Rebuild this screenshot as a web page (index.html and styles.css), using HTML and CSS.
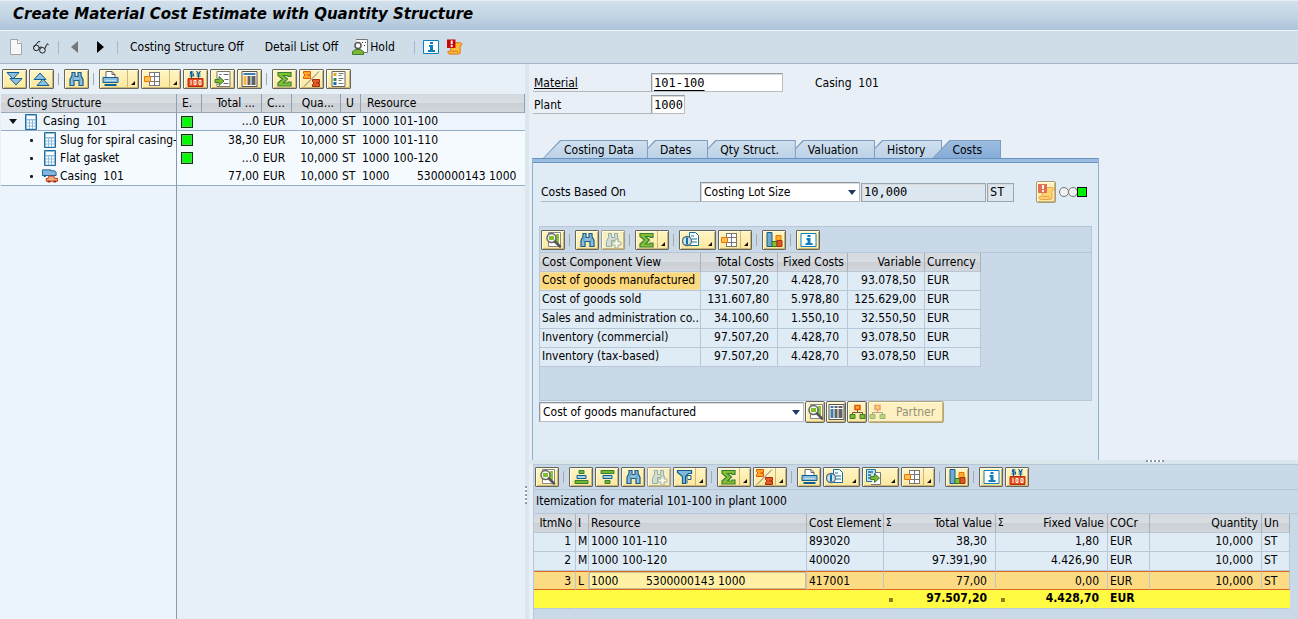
FILE: index.html
```
<!DOCTYPE html>
<html lang="en">
<head>
<meta charset="utf-8">
<title>Create Material Cost Estimate with Quantity Structure</title>
<link rel="stylesheet" href="styles.css">
</head>
<body>
<svg class="sprite" aria-hidden="true">
  <symbol id="doc" viewBox="0 0 16 16"><path d="M2.500 .5h7l4 4v11h-11z" fill="#f7f7f7" stroke="#a5a5a5"/><path d="M9.500 .5v4h4" fill="#fff" stroke="#a5a5a5"/></symbol>
  <symbol id="glasses" viewBox="0 0 17 16"><g fill="none" stroke="#111"><circle cx="3.500" cy="9" r="3"/><circle cx="10" cy="11.500" r="3"/><path d="M6.500 9c1-1.500 3-1 3-.5M1 8L5.500 2.500c1-1 2-.5 1.500 .5M12.500 10L14.500 5.500c.5-1.500 2-1 1.500 .5"/></g></symbol>
  <symbol id="prev" viewBox="0 0 16 16"><path d="M11 2v12L4 8z" fill="#777"/></symbol>
  <symbol id="next" viewBox="0 0 16 16"><path d="M5 2v12l7-6z" fill="#000"/></symbol>
  <symbol id="hold" viewBox="0 0 16 16"><path d="M4 .5h11.500v13H11" fill="#fff" stroke="#777"/><path d="M10 3h1v1h-1zM13 3h1v1h-1zM12 6h1v1h-1z" fill="#333"/><circle cx="6" cy="6.500" r="3" fill="#fff" stroke="#555" stroke-width="1.500"/><path d="M.5 15.500v-3l3-2h5l3 2v3z" fill="#7db52f" stroke="#3c7d35"/></symbol>
  <symbol id="info" viewBox="0 0 16 16"><path d="M.5 1.500h15v13H.5z" fill="#fff" stroke="#0b7fbf"/><path d="M7 3h3v2H7zM6 6h4v5h2v2H5v-2h2V8H6z" fill="#0b7fbf"/></symbol>
  <symbol id="scroll" viewBox="0 0 17 16"><path d="M4 3.500h9c3-1 4 3 1 3v6c1 3-2 3-3 3H3c-2 0-3-3-1-3h2z" fill="#ffbf35" stroke="#dc6a12"/><path d="M5 12.500h6c0 2 1 3 2 2" fill="#ffe08a" stroke="#dc6a12"/><path d="M0 0h9v9H0z" fill="#cb0606"/><path d="M4 1h2v4H4zM4 6h2v2H4z" fill="#fff"/></symbol>
  <symbol id="down" viewBox="0 0 16 16"><path d="M3.500 7.500h12L9.500 14z" fill="#8fbedd" stroke="#0c5f94"/><path d="M.5 1.500h12l-6 6.500z" fill="#8fbedd" stroke="#0c5f94"/></symbol>
  <symbol id="up" viewBox="0 0 16 16"><path d="M.5 8.500h12L6.500 2z" fill="#8fbedd" stroke="#0c5f94"/><path d="M3.500 14.500h12L9.500 8z" fill="#8fbedd" stroke="#0c5f94"/></symbol>
  <symbol id="find" viewBox="0 0 16 16"><path d="M3.500 1.500h3v4h3v-4h3v3l2 4v6h-4v-5h-5v5h-4v-6l2-4z" fill="#8fbedd" stroke="#145d8c" stroke-width="1.200"/><path d="M4.500 4v6M11.500 4v6" stroke="#5d9bc3"/></symbol>
  <symbol id="findnext" viewBox="0 0 17 16"><g opacity=".5"><path d="M3.500 1.500h3v4h3v-4h3v4l1 3h-7v6h-5v-5l2-4z" fill="#b4ced9" stroke="#31708e"/><path d="M10 7h3v3h3v3h-3v3h-3v-3H7v-3h3z" fill="#fff" stroke="#477985"/></g></symbol>
  <symbol id="print" viewBox="0 0 16 16"><path d="M3.500 6.500V.5h6l3 3v3" fill="#fff" stroke="#666"/><path d="M9.500 .5v3h3" fill="none" stroke="#666"/><path d="M.5 6.500h15v5H.5z" fill="#8fbedd" stroke="#0c5f94"/><path d="M3 9.500h10" stroke="#c2dced"/><path d="M2 14h12" stroke="#0c5f94" stroke-width="2"/></symbol>
  <symbol id="layout" viewBox="0 0 17 16"><path d="M5 1h11v14H5z" fill="#fff"/><path d="M5.500 1v14M10.500 1v14M15.500 1v14M5 1.500h11M5 5.500h11M5 10.500h11M5 14.500h11" fill="none" stroke="#777"/><path d="M.5 5.500h6v5h-6z" fill="#ffc04d" stroke="#e5780c"/></symbol>
  <symbol id="currency" viewBox="0 0 16 16"><path d="M6 1H3v2h3v2H2M4 0v7M9 0l2 3 2-3M9 3h4M9 5h4M11 3v4" fill="none" stroke="#0c5f94" stroke-width="1.200"/><path d="M.5 7.500h15v8H.5z" fill="#e0501e" stroke="#bd2b0a"/><path d="M3.500 9v5M6.500 9.500h2v4h-2zM11.500 9.500h2v4h-2z" fill="none" stroke="#fff"/></symbol>
  <symbol id="branch" viewBox="0 0 16 16"><path d="M2.500 .5h13v15h-13z" fill="#fff" stroke="#777"/><path d="M5 3.500h2M9 3.500h5M10 8.500h4M9 12.500h5" stroke="#666"/><path d="M.5 8.500h4v-3l5 4.500-5 4.500v-3h-4z" fill="#80b831" stroke="#3a7d34"/></symbol>
  <symbol id="columns" viewBox="0 0 16 16"><path d="M.5 .5h15v15H.5z" fill="#fff" stroke="#555"/><path d="M2 2h12v2H2z" fill="#3b7fb0"/><path d="M2 5h3v9H2z" fill="#ffb52d"/><path d="M6 5h3v9H6zM10 5h4v9h-4z" fill="#626262"/></symbol>
  <symbol id="grid" viewBox="0 0 16 16"><path d="M.5 .5h15v15H.5z" fill="#fff" stroke="#555"/><path d="M2 2h3v2H2zM2 5h3v9H2z" fill="#3b7fb0"/><path d="M6 2h3v2H6zM10 2h4v2h-4zM6 5h3v9H6zM10 5h4v9h-4z" fill="#626262"/></symbol>
  <symbol id="sum" viewBox="0 0 16 16"><path d="M1.500 1.500h13v4h-3v-1H7l4 3.500-4 4h4.500v-1h3v4h-13v-3L6 8 1.500 4.500z" fill="#89bf2d" stroke="#34813c" stroke-width="1.200"/></symbol>
  <symbol id="subsum" viewBox="0 0 17 16"><path d="M1 15.500L16 .5" stroke="#777"/><path d="M.5 .5h7v3H5.500L4.500 4l1 .5h2v3h-7v-2L2 4 .5 2.500z" fill="#ffa424" stroke="#df5b0b"/><path d="M9.500 8.500h7v3h-2l-1 .5 1 .5h2v3h-7v-2l1.500-1.500-1.500-1.500z" fill="#e35a22" stroke="#a82a10"/></symbol>
  <symbol id="legend" viewBox="0 0 16 16"><path d="M1.500 .5h13v15h-13z" fill="#fff" stroke="#666"/><path d="M3 2h3v3H3z" fill="#e5a718"/><path d="M3 7h3v3H3z" fill="#378748"/><path d="M3 11h3v3H3z" fill="#17719f"/><path d="M8 2.500h5M8 4.500h3M8 7.500h5M8 9.500h3M8 12.500h5" stroke="#777"/></symbol>
  <symbol id="detail" viewBox="0 0 17 16"><path d="M3.500 .5h12v14h-12z" fill="#fff" stroke="#888"/><path d="M11 2h3v9h-3z" fill="#8bc52f"/><circle cx="6.500" cy="6" r="4.500" fill="#f6f8f2" stroke="#666" stroke-width="1.500"/><path d="M4 4h5v4H4z" fill="#7fbf2a"/><path d="M10 9.500l5 5" stroke="#555" stroke-width="2.500" stroke-linecap="round"/></symbol>
  <symbol id="view" viewBox="0 0 17 16"><path d="M7.500 .5h6l3 3v10h-9z" fill="#fff" stroke="#0c6f9e"/><path d="M9 4h3M10 7h5M10 10h5" stroke="#17719f"/><circle cx="5" cy="9" r="4.500" fill="#d0e3ec" stroke="#4d6f80" stroke-width="1.300"/><path d="M5 5.500v7" stroke="#17719f" stroke-width="2"/></symbol>
  <symbol id="chart" viewBox="0 0 16 16"><path d="M.5 .5h5v14h-5z" fill="#72aacf" stroke="#0c5f94"/><path d="M9.500 3.500h5v6h-5z" fill="#ffae26" stroke="#e3770e"/><path d="M5.500 9.500h5v5h-5z" fill="#85bd2c" stroke="#367a32"/><path d="M10.500 8.500h5v6h-5z" fill="#dc5522" stroke="#a83413"/></symbol>
  <symbol id="asc" viewBox="0 0 16 16"><path d="M5.500 1.500h5v3h-5zM1.500 11.500h13v3h-13z" fill="#79b62b" stroke="#34803a"/><path d="M3.500 6.500h9v3h-9z" fill="#a9d0e8" stroke="#0c5f94"/></symbol>
  <symbol id="desc" viewBox="0 0 16 16"><path d="M1.500 1.500h13v3h-13zM5.500 11.500h5v3h-5z" fill="#79b62b" stroke="#34803a"/><path d="M3.500 6.500h9v3h-9z" fill="#a9d0e8" stroke="#0c5f94"/></symbol>
  <symbol id="filter" viewBox="0 0 16 16"><path d="M1 1.500h14v3h-3l-3 3v7H6v-7l-5-4z" fill="#84b6d8" stroke="#0c5f94" stroke-width="1.200"/><path d="M10.500 14.500v-8h4v4h-3" fill="none" stroke="#0c5f94"/></symbol>
  <symbol id="export" viewBox="0 0 17 16"><path d="M1.500 .5h9v12h-9z" fill="#cae0ed" stroke="#1678a5"/><path d="M3 3h5M3 6h3M3 9h2" stroke="#17719f" stroke-width="1.500"/><path d="M11 3.500h4.500v12H6" fill="#fff" stroke="#777"/><path d="M5.500 7.500h4v-3l5 4.500-5 4.500v-3h-4z" fill="#80b831" stroke="#3a7d34"/></symbol>
  <symbol id="tree" viewBox="0 0 16 16"><path d="M8 5v4M3 12V8.500h10V12" fill="none" stroke="#6d5732"/><path d="M5.500 1.500h5v4h-5z" fill="#ffb129" stroke="#e15214" stroke-width="1.500"/><path d="M.5 10.500h5v4h-5zM10.500 10.500h5v4h-5z" fill="#82ba2f" stroke="#3e7b32"/></symbol>
  <symbol id="calc" viewBox="0 0 14 16"><path d="M1.500 .5h11v15h-11z" fill="#8ebcdc" stroke="#246c9e"/><path d="M3 2h8v3H3z" fill="#fff"/><path d="M3 7.500h8M3 10.500h8M3 13.500h8" stroke="#fff" stroke-width="2" stroke-dasharray="2 1"/></symbol>
  <symbol id="cars" viewBox="0 0 17 16"><path d="M.5 1.500h9v1h4l1.500 2v3H.5z" fill="#83b8dc" stroke="#0c5f94"/><path d="M2 7h2v2H2zM10 7h2v2h-2z" fill="#0c5f94"/><path d="M4.500 13.500h12v-3h-3l-1-2.500H7.500l-1 2.500h-2z" fill="#efab7d" stroke="#bd320e"/><path d="M6 13h3v2H6zM12 13h3v2h-3z" fill="#a52308"/></symbol>
</svg>

<header class="titlebar"><h1>Create Material Cost Estimate with Quantity Structure</h1></header>
<nav class="appbar" aria-label="Application toolbar">
  <button class="flat" aria-label="New"><svg class="ic"><use href="#doc"/></svg></button>
  <button class="flat glasses" aria-label="Display"><svg class="ic"><use href="#glasses"/></svg></button>
  <i class="rule"></i>
  <button class="flat" aria-label="Previous"><svg class="ic"><use href="#prev"/></svg></button>
  <button class="flat next" aria-label="Next"><svg class="ic"><use href="#next"/></svg></button>
  <i class="rule"></i>
  <button class="flat text">Costing Structure Off</button>
  <button class="flat text detail-off">Detail List Off</button>
  <button class="flat text"><svg class="ic"><use href="#hold"/></svg>Hold</button>
  <i class="rule last"></i>
  <button class="flat" aria-label="Information"><svg class="ic"><use href="#info"/></svg></button>
  <button class="flat log" aria-label="Log"><svg class="ic"><use href="#scroll"/></svg></button>
</nav>

<main class="work">
  <section class="structure" aria-label="Costing structure">
    <div class="tools wide">
      <button class="btn" aria-label="Expand"><svg class="ic"><use href="#down"/></svg></button>
      <button class="btn" aria-label="Collapse"><svg class="ic"><use href="#up"/></svg></button>
      <i class="sep"></i>
      <button class="btn" aria-label="Find"><svg class="ic"><use href="#find"/></svg></button>
      <i class="sep"></i>
      <button class="btn split" aria-label="Print"><svg class="ic"><use href="#print"/></svg><span class="more"></span></button>
      <button class="btn split" aria-label="Layout"><svg class="ic"><use href="#layout"/></svg><span class="more"></span></button>
      <button class="btn" aria-label="Currency"><svg class="ic"><use href="#currency"/></svg></button>
      <button class="btn" aria-label="Partial structure"><svg class="ic"><use href="#branch"/></svg></button>
      <button class="btn" aria-label="Columns"><svg class="ic"><use href="#columns"/></svg></button>
      <i class="sep"></i>
      <button class="btn" aria-label="Sum"><svg class="ic"><use href="#sum"/></svg></button>
      <button class="btn" aria-label="Subtotal"><svg class="ic"><use href="#subsum"/></svg></button>
      <button class="btn" aria-label="Legend"><svg class="ic"><use href="#legend"/></svg></button>
    </div>
    <table class="tree">
      <colgroup><col class="w-name"><col class="w-e"><col class="w-total"><col class="w-c"><col class="w-qty"><col class="w-u"><col></colgroup>
      <thead><tr><th>Costing Structure</th><th>E.</th><th class="num">Total ...</th><th>C...</th><th class="num">Qua...</th><th>U</th><th>Resource</th></tr></thead>
      <tbody>
        <tr class="root"><td><div class="node"><span class="open"></span><svg class="ic"><use href="#calc"/></svg>Casing  101</div></td><td><span class="ok"></span></td><td class="num">...0</td><td>EUR</td><td class="num">10,000</td><td>ST</td><td>1000 101-100</td></tr>
        <tr><td><div class="node child"><span class="dot"></span><svg class="ic"><use href="#calc"/></svg>Slug for spiral casing-</div></td><td><span class="ok"></span></td><td class="num">38,30</td><td>EUR</td><td class="num">10,000</td><td>ST</td><td>1000 101-110</td></tr>
        <tr><td><div class="node child"><span class="dot"></span><svg class="ic"><use href="#calc"/></svg>Flat gasket</div></td><td><span class="ok"></span></td><td class="num">...0</td><td>EUR</td><td class="num">10,000</td><td>ST</td><td>1000 100-120</td></tr>
        <tr class="end"><td><div class="node child"><span class="dot"></span><svg class="ic"><use href="#cars"/></svg>Casing  101</div></td><td></td><td class="num">77,00</td><td>EUR</td><td class="num">10,000</td><td>ST</td><td>1000        5300000143 1000</td></tr>
      </tbody>
    </table>
    <div class="treefill"></div>
  </section>
  <div class="vsplit"><span class="grip"></span></div>
  <div class="right">
    <section class="details" aria-label="Material details">
      <div class="keys">
        <div class="field"><label for="mat"><u>Material</u></label><input id="mat" class="link" value="101-100"><span class="desc">Casing  101</span></div>
        <div class="field"><label for="plant">Plant</label><input id="plant" class="short" value="1000"></div>
      </div>
      <div class="tabs" role="tablist">
        <button class="tab" role="tab">Costing Data</button><button class="tab" role="tab">Dates</button><button class="tab" role="tab">Qty Struct.</button><button class="tab" role="tab">Valuation</button><button class="tab" role="tab">History</button><button class="tab active" role="tab" aria-selected="true">Costs</button>
      </div>
      <div class="panel" role="tabpanel">
        <div class="basis">
          <label for="basis">Costs Based On</label>
          <span class="drop lot"><select id="basis"><option>Costing Lot Size</option></select></span>
          <input class="ro amount" value="10,000" readonly aria-label="Lot size"><input class="ro unit" value="ST" readonly aria-label="Unit">
          <button class="btn small faded" aria-label="Log"><svg class="ic"><use href="#scroll"/></svg></button>
          <span class="lights"><i></i><i></i><b></b></span>
        </div>
        <div class="gridbox">
          <div class="tools">
            <button class="btn" aria-label="Details"><svg class="ic"><use href="#detail"/></svg></button>
            <i class="sep"></i>
            <button class="btn" aria-label="Find"><svg class="ic"><use href="#find"/></svg></button>
            <button class="btn off" aria-label="Find next"><svg class="ic"><use href="#findnext"/></svg></button>
            <i class="sep"></i>
            <button class="btn split" aria-label="Sum"><svg class="ic"><use href="#sum"/></svg><span class="more"></span></button>
            <i class="sep"></i>
            <button class="btn menu" aria-label="Views"><svg class="ic"><use href="#view"/></svg><span class="more"></span></button>
            <button class="btn split" aria-label="Layout"><svg class="ic"><use href="#layout"/></svg><span class="more"></span></button>
            <i class="sep"></i>
            <button class="btn" aria-label="Graphic"><svg class="ic"><use href="#chart"/></svg></button>
            <i class="sep"></i>
            <button class="btn" aria-label="Information"><svg class="ic"><use href="#info"/></svg></button>
          </div>
          <table class="grid views">
            <colgroup><col class="w-view"><col class="w-tc"><col class="w-fc"><col class="w-var"><col class="w-cur"></colgroup>
            <thead><tr><th>Cost Component View</th><th class="num">Total Costs</th><th class="num">Fixed Costs</th><th class="num">Variable</th><th>Currency</th></tr></thead>
            <tbody>
              <tr><td class="picked">Cost of goods manufactured</td><td class="num">97.507,20</td><td class="num">4.428,70</td><td class="num">93.078,50</td><td>EUR</td></tr>
              <tr><td>Cost of goods sold</td><td class="num">131.607,80</td><td class="num">5.978,80</td><td class="num">125.629,00</td><td>EUR</td></tr>
              <tr><td>Sales and administration co...</td><td class="num">34.100,60</td><td class="num">1.550,10</td><td class="num">32.550,50</td><td>EUR</td></tr>
              <tr><td>Inventory (commercial)</td><td class="num">97.507,20</td><td class="num">4.428,70</td><td class="num">93.078,50</td><td>EUR</td></tr>
              <tr><td>Inventory (tax-based)</td><td class="num">97.507,20</td><td class="num">4.428,70</td><td class="num">93.078,50</td><td>EUR</td></tr>
            </tbody>
          </table>
        </div>
        <div class="pick">
          <span class="drop cogm"><select aria-label="Cost component view"><option>Cost of goods manufactured</option></select></span>
          <button class="btn small" aria-label="Details"><svg class="ic"><use href="#detail"/></svg></button>
          <button class="btn small" aria-label="Table"><svg class="ic"><use href="#grid"/></svg></button>
          <button class="btn small" aria-label="Hierarchy"><svg class="ic"><use href="#tree"/></svg></button>
          <button class="btn small partner" disabled><svg class="ic"><use href="#tree"/></svg>Partner</button>
        </div>
      </div>
    </section>
    <div class="hsplit"><span class="grip"></span></div>
    <section class="items" aria-label="Itemization">
      <div class="tools">
        <button class="btn" aria-label="Details"><svg class="ic"><use href="#detail"/></svg></button>
        <i class="sep"></i>
        <button class="btn" aria-label="Sort ascending"><svg class="ic"><use href="#asc"/></svg></button>
        <button class="btn" aria-label="Sort descending"><svg class="ic"><use href="#desc"/></svg></button>
        <button class="btn" aria-label="Find"><svg class="ic"><use href="#find"/></svg></button>
        <button class="btn off" aria-label="Find next"><svg class="ic"><use href="#findnext"/></svg></button>
        <button class="btn split" aria-label="Filter"><svg class="ic"><use href="#filter"/></svg><span class="more"></span></button>
        <i class="sep"></i>
        <button class="btn split" aria-label="Sum"><svg class="ic"><use href="#sum"/></svg><span class="more"></span></button>
        <button class="btn split" aria-label="Subtotal"><svg class="ic"><use href="#subsum"/></svg><span class="more"></span></button>
        <i class="sep"></i>
        <button class="btn" aria-label="Print"><svg class="ic"><use href="#print"/></svg></button>
        <button class="btn menu" aria-label="Views"><svg class="ic"><use href="#view"/></svg><span class="more"></span></button>
        <button class="btn menu" aria-label="Export"><svg class="ic"><use href="#export"/></svg><span class="more"></span></button>
        <button class="btn split" aria-label="Layout"><svg class="ic"><use href="#layout"/></svg><span class="more"></span></button>
        <i class="sep"></i>
        <button class="btn" aria-label="Graphic"><svg class="ic"><use href="#chart"/></svg></button>
        <i class="sep"></i>
        <button class="btn" aria-label="Information"><svg class="ic"><use href="#info"/></svg></button>
        <button class="btn" aria-label="Currency"><svg class="ic"><use href="#currency"/></svg></button>
      </div>
      <h2>Itemization for material 101-100 in plant 1000</h2>
      <table class="grid itemization">
        <colgroup><col class="w-no"><col class="w-i"><col><col class="w-ce"><col class="w-val"><col class="w-val"><col class="w-co"><col class="w-val"><col class="w-un"></colgroup>
        <thead><tr><th class="num">ItmNo</th><th>I</th><th>Resource</th><th>Cost Element</th><th class="num"><span class="sigma">Σ</span>Total Value</th><th class="num"><span class="sigma">Σ</span>Fixed Value</th><th>COCr</th><th class="num">Quantity</th><th>Un</th></tr></thead>
        <tbody>
          <tr><td class="num no">1</td><td>M</td><td>1000 101-110</td><td>893020</td><td class="num">38,30</td><td class="num">1,80</td><td>EUR</td><td class="num">10,000</td><td>ST</td></tr>
          <tr><td class="num no">2</td><td>M</td><td>1000 100-120</td><td>400020</td><td class="num">97.391,90</td><td class="num">4.426,90</td><td>EUR</td><td class="num">10,000</td><td>ST</td></tr>
          <tr class="sel"><td class="num no">3</td><td>L</td><td class="focus">1000        5300000143 1000</td><td>417001</td><td class="num">77,00</td><td class="num">0,00</td><td>EUR</td><td class="num">10,000</td><td>ST</td></tr>
          <tr class="total"><td></td><td></td><td></td><td></td><td class="num"><span class="mark"></span>97.507,20</td><td class="num"><span class="mark"></span>4.428,70</td><td>EUR</td><td></td><td></td></tr>
        </tbody>
      </table>
    </section>
  </div>
</main>
</body>
</html>
```
FILE: styles.css
```
* { box-sizing: border-box; }
body {
  margin: 0; min-height: 100vh; display: flex; flex-direction: column;
  font: 12px/18px "DejaVu Sans Condensed", "DejaVu Sans", Tahoma, sans-serif;
  color: #000; background: #e8eff7;
}
button, input, select { font: inherit; color: inherit; margin: 0; }
.sprite { display: none; }
.ic { width: 16px; height: 16px; flex: none; display: block; }

.titlebar {
  height: 30px; padding: 0 13px; display: flex; align-items: center;
  background: linear-gradient(#d2e0eb, #bfd2e2 60%, #adc4da);
  border-top: 1px solid #e7eef5;
}
.titlebar h1 { margin: 0 0 4px; font-family: "DejaVu Sans", Tahoma, sans-serif; font-size: 15px; line-height: 20px; font-weight: bold; font-style: italic; white-space: nowrap; }
.appbar {
  height: 34px; display: flex; align-items: center; padding: 0 8px;
  background: #cfdde8; border-top: 1px solid #edf3f8; border-bottom: 1px solid #a3b7cb;
}
.flat { border: 0; padding: 0; background: none; display: flex; align-items: center; gap: 2px; white-space: nowrap; }
.flat.glasses { margin: 0 9px; }
.rule { width: 1px; height: 13px; background: #9dbbd8; margin-right: 8px; }
.flat.next { margin: 0 9px; }
.appbar .rule:nth-of-type(2) { margin-right: 12px; }
.detail-off { margin: 0 14px 0 21px; }
.rule.last { margin: 0 8px 0 19px; }
.log { margin-left: 8px; }

.work { flex: 1; display: grid; grid-template-columns: minmax(0, 525fr) 4px minmax(0, 769fr); }
.structure { display: flex; flex-direction: column; background: #e8f0f7; }
.tools { display: flex; align-items: center; gap: 2px; height: 24px; padding: 0 1px; }
.tools.wide { height: 30px; padding: 0 2px; }
.sep { width: 4px; height: 12px; border-left: 1px solid #a5a9ab; margin-left: 2px; }
.btn {
  width: 24px; height: 20px; padding: 0; border: 1px solid #68645a; border-radius: 1px;
  box-shadow: inset 1px 1px #fffbe0, inset -1px -1px #c9b67a;
  background: linear-gradient(#fff5c6, #fce79c); display: flex; align-items: center; justify-content: center;
}
.btn .ic { width: 17px; }
.wide .btn { width: 25px; }
.btn.split { width: 34px; justify-content: space-between; padding-left: 2px; }
.btn.menu { width: 37px; justify-content: space-between; padding-left: 2px; }
.wide .btn.split { width: 40px; }
.more { align-self: stretch; width: 11px; display: flex; align-items: flex-end; justify-content: center; padding-bottom: 3px; }
.split .more { border-left: 1px solid #cdb973; }
.more::after { content: ""; border-left: 4px solid transparent; border-bottom: 4px solid #111; }
.btn.off { border-color: #a49d86; background: #f6eec5; }

table { border-collapse: separate; border-spacing: 0; table-layout: fixed; }
th, td { padding: 0; white-space: pre; overflow: hidden; font-weight: normal; text-align: left; }
.num { text-align: right; }
th { background: linear-gradient(#d3dae0, #d9dde1 50%, #cbd0d6 50%, #d3d7dc); }

.tree { width: 100%; padding-left: 1px; }
.w-name { width: 176px; } .w-e { width: 25px; } .w-total { width: 60px; } .w-c { width: 30px; }
.w-qty { width: 49px; } .w-u { width: 20px; }
.tree th { height: 19px; line-height: 18px; padding: 0 6px; border-right: 1px solid #8fa0b0; border-bottom: 1px solid #9aa8b5; }
.tree th:nth-child(2), .tree th:nth-child(4), .tree th:nth-child(6) { padding: 0 5px; }
.tree td { height: 18px; background: #f5faff; padding: 0 1px; }
.tree td:first-child { border-right: 1px solid #879bb0; padding: 0; }
.tree td.num { padding-right: 3px; }
.tree .root td { background: #edf4fc; border-bottom: 1px solid #94adc6; line-height: 17px; }
.tree .end td { border-bottom: 1px solid #94adc6; height: 19px; }
.node { display: flex; align-items: center; height: 17px; padding-left: 8px; }
.node .ic { width: 14px; margin: 0 5px 0 7px; }
.node.child { padding-left: 29px; }
.node.child .ic { width: 16px; margin: 0 2px 0 9px; }
.open { flex: none; border: 4px solid transparent; border-top: 5px solid #111; border-bottom: 0; }
.dot { flex: none; width: 3px; height: 3px; border-radius: 1px; background: #222; }
.ok { display: block; width: 12px; height: 12px; margin-left: 3px; border: 1px solid #063b06; background: #00fb00; box-shadow: inset 0 0 0 1px #58cf58; }
.treefill { flex: 1; width: 177px; border-right: 1px solid #879bb0; background: #ebf3fb; }

.vsplit { background: #dbe6ed; display: flex; align-items: flex-start; padding-top: 422px; }
.vsplit .grip { width: 2px; height: 18px; background: repeating-linear-gradient(#8a99a8 0 2px, #fff 2px 4px); }
.right { display: flex; flex-direction: column; min-width: 0; }
.details { flex: 1; display: flex; flex-direction: column; padding-left: 3px; }
.keys { padding: 9px 0 0 1px; display: grid; gap: 3px; }
.field { display: flex; align-items: stretch; height: 19px; }
.field label { width: 118px; border-bottom: 1px solid #b4b8bb; padding-left: 1px; }
.field label, .desc { line-height: 20px; white-space: pre; }
input {
  font: 12px/16px "DejaVu Sans Mono", "Liberation Mono", monospace; padding: 0 2px; border-radius: 0;
  border: 1px solid #989da1; border-right-color: #b8bcc0; border-bottom-color: #b8bcc0; background: #fff; min-width: 0;
  box-shadow: inset 1px 1px #d8dadc;
}
#mat { width: 132px; text-decoration: underline; text-underline-offset: 3px; }
#plant { width: 34px; padding-right: 0; }
.desc { margin-left: 32px; }
.tabs { display: flex; padding-left: 11px; margin-top: 26px; height: 18px; }
.tab { position: relative; isolation: isolate; border: 0; background: none; padding: 1px 17px 0 22px; margin-left: -10px; white-space: nowrap; line-height: 18px; }
.tab:first-child { margin-left: 0; padding: 1px 14px 0 21px; }
.tab:nth-child(1) { z-index: 5; } .tab:nth-child(2) { z-index: 4; } .tab:nth-child(3) { z-index: 3; } .tab:nth-child(4) { z-index: 2; } .tab:nth-child(5) { z-index: 1; }
.tab.active { z-index: 6; padding-right: 19px; padding-left: 20px; }
.tab::before, .tab::after { content: ""; position: absolute; inset: 0; z-index: -1; clip-path: polygon(17px 0, 100% 0, 100% 100%, 0 100%); background: #7f9dbf; }
.tab::after { inset: 1px 1px 0 1px; background: linear-gradient(#cfdfee, #bcd2e7); }
.tab.active::after { background: linear-gradient(#9dbddf, #84abd6); }
.panel { flex: 1; margin-right: 26%; background: #dfebf5; border: 1px solid #8eb0d0; border-top-color: #6793c3; border-bottom: 0; padding: 0 6px 24px; }
.panel::before { content: ""; display: block; height: 3px; margin: 0 -6px 19px; background: #9cbce0; border-bottom: 1px solid #6793c3; }
.basis { display: flex; align-items: center; height: 20px; padding-left: 2px; }
.basis label { flex: 0 1 159px; height: 20px; line-height: 21px; border-bottom: 1px solid #b4b8bb; white-space: nowrap; }
.basis .btn { margin: 0 3px 0 22px; }
.drop { position: relative; display: flex; }
.drop select { appearance: none; width: 100%; height: 20px; line-height: 16px; border: 1px solid #8f979e; border-right-color: #b8bcc0; border-bottom-color: #b8bcc0; border-radius: 0; background: #fff; padding: 0 3px; box-shadow: inset 1px 1px #d8dadc; }
.drop::after { content: ""; position: absolute; right: 4px; top: 8px; border: 4px solid transparent; border-top: 5px solid #203a68; border-bottom: 0; pointer-events: none; }
.lot { flex: 0 1 160px; }
.ro { background: #dce7f0; height: 19px; border-color: #9ba6b0; }
.amount { margin: 0 1px; flex: 0 1 125px; width: 0; }
.unit { flex: 0 1 27px; width: 0; }
.btn.small { width: 20px; height: 22px; border-radius: 2px; }
.btn.faded .ic { opacity: .55; }
.btn.faded { border-color: #a99b79; }
.lights { display: flex; align-items: center; }
.lights i { width: 10px; height: 10px; border: 1px solid #777; border-radius: 50%; background: #f1f1f1; margin-right: -1px; }
.lights b { width: 10px; height: 10px; border: 1px solid #111; background: #00f000; }
.gridbox { margin-top: 24px; min-height: 175px; background: #cad9e8; border: 1px solid #b7c7d8; }
.gridbox .tools { border-bottom: 1px solid #b7c7d8; height: 26px; }
.grid th { height: 19px; line-height: 18px; padding: 0 2px; border-right: 1px solid #a8b2bd; border-bottom: 1px solid #b9c6d3; }
.grid th.num { padding-right: 3px; }
.grid td { height: 19px; line-height: 16px; padding: 0 2px 2px; background: #dfebf5; border-right: 1px solid #b9c8d6; border-bottom: 1px solid #b9c8d6; }
.grid td.num { padding-right: 8px; }
.views { width: 441px; max-width: 100%; }
.w-view { width: 161px; } .w-tc { width: 77px; } .w-fc { width: 70px; } .w-var { width: 77px; } .w-cur { width: 56px; }
.grid td.picked { background: #fdd97c; box-shadow: inset 0 0 0 1px #eee0b3; }
.pick { display: flex; gap: 1px; align-items: center; }
.cogm { flex: 0 1 265px; }
.btn.partner { width: 76px; justify-content: flex-start; gap: 10px; border-color: #b5a477; color: #979078; background: #fdf1c2; }
.partner .ic { opacity: .5; }

.hsplit { height: 4px; background: #dbe6ed; display: flex; justify-content: flex-end; padding-right: 134px; }
.hsplit .grip { width: 18px; height: 2px; background: repeating-linear-gradient(90deg, #8a99a8 0 2px, #fff 2px 4px); }
.items { margin-left: 4px; background: #cad9e8; border: 1px solid #b7c7d8; border-right: 0; border-bottom: 0; padding-bottom: 10px; }
.items .tools { height: 25px; border-bottom: 1px solid #b7c7d8; }
.items h2 { margin: 0; font-size: 12px; font-weight: normal; line-height: 23px; padding-left: 2px; border-bottom: 1px solid #b7c7d8; white-space: nowrap; }
.itemization { width: calc(100% - 8px); }
.w-no { width: 42px; } .w-i { width: 13px; } .w-ce { width: 77px; } .w-val { width: 112px; } .w-co { width: 42px; } .w-un { width: 28px; }
.grid td.no { padding-right: 4px; }
.sigma { float: left; font-size: 10px; }
.itemization .sel td { background: #fddb83; border-top: 1px solid #dc6722; border-bottom-color: #dc6722; padding-bottom: 0; }
.itemization .sel .focus { background: #fff0a5; box-shadow: inset 0 0 0 1px #cbbf94; }
.itemization .total td { background: #fffa42; border-right-color: #fffa42; font-weight: bold; }
.mark { float: left; width: 4px; height: 4px; margin: 8px 0 0 3px; background: #86811d; }
```
